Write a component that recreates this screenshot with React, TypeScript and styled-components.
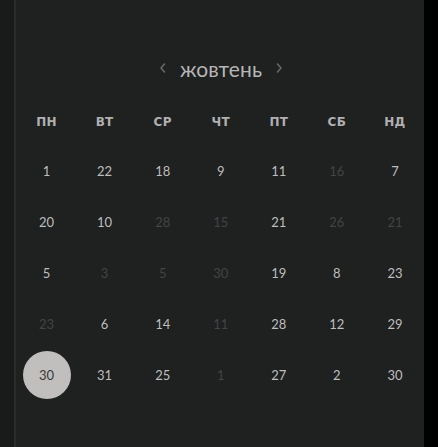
import React from "react";
import styled, { createGlobalStyle } from "styled-components";

const Global = createGlobalStyle`
  html, body { margin: 0; padding: 0; background: #000; }
  body { font-family: "Lato", "Noto Sans", sans-serif; }
`;

const Page = styled.div`
  display: flex;
  width: 438px;
  height: 447px;
  background: #000;
  overflow: hidden;
`;

const Rail = styled.div`
  width: 14px;
  background: #191a1a;
  border-right: 2px solid #2a2b2b;
`;

const Panel = styled.div`
  width: 408px;
  background: #1f2020;
  padding-top: 53px;
  box-sizing: border-box;
`;

const TitleRow = styled.div`
  height: 30px;
  display: flex;
  align-items: center;
  justify-content: center;
  gap: 12px;
  padding-left: 2px;
`;

const Title = styled.span`
  color: #b6b6b6;
  font-size: 21px;
  letter-spacing: 0.1px;
`;

const Chevron = styled.button`
  background: none;
  border: 0;
  padding: 0;
  display: flex;
  color: #6a6a6a;
  cursor: pointer;
`;

const Grid = styled.div`
  margin-top: 15px;
  padding-left: 1.5px;
  display: grid;
  grid-template-columns: repeat(7, 1fr);
  grid-auto-rows: 51px;
  grid-template-rows: 47px;
`;

const Weekday = styled.div`
  display: flex;
  align-items: center;
  justify-content: center;
  color: #b0b0b0;
  font-size: 12px;
  font-weight: 700;
  font-family: "DejaVu Sans", sans-serif;
  letter-spacing: 0.3px;
`;

const Cell = styled.div`
  display: flex;
  align-items: center;
  justify-content: center;
`;

const Day = styled.span<{ $dim?: boolean; $selected?: boolean }>`
  width: 48px;
  height: 48px;
  border-radius: 50%;
  display: flex;
  align-items: center;
  justify-content: center;
  font-size: 13px;
  color: ${(p) => (p.$selected ? "#3a3a3a" : p.$dim ? "#434444" : "#bebebe")};
  background: ${(p) => (p.$selected ? "#c0bfbd" : "transparent")};
`;

const weekdays = ["ПН", "ВТ", "СР", "ЧТ", "ПТ", "СБ", "НД"];

type D = [number, boolean?];
const rows: D[][] = [
  [[1], [22], [18], [9], [11], [16, true], [7]],
  [[20], [10], [28, true], [15, true], [21], [26, true], [21, true]],
  [[5], [3, true], [5, true], [30, true], [19], [8], [23]],
  [[23, true], [6], [14], [11, true], [28], [12], [29]],
  [[30], [31], [25], [1, true], [27], [2], [30]],
];

const ChevronIcon = ({ dir }: { dir: "l" | "r" }) => (
  <svg width="10" height="12" viewBox="0 0 10 12" fill="none">
    <path
      d={dir === "l" ? "M6.5 2 L3 6 L6.5 10" : "M3.5 2 L7 6 L3.5 10"}
      stroke="currentColor"
      strokeWidth="1.5"
      strokeLinecap="round"
      strokeLinejoin="round"
    />
  </svg>
);

export default function App() {
  return (
    <>
      <Global />
      <Page>
        <Rail />
        <Panel>
          <TitleRow>
            <Chevron aria-label="prev">
              <ChevronIcon dir="l" />
            </Chevron>
            <Title>жовтень</Title>
            <Chevron aria-label="next">
              <ChevronIcon dir="r" />
            </Chevron>
          </TitleRow>
          <Grid>
            {weekdays.map((w) => (
              <Weekday key={w}>{w}</Weekday>
            ))}
            {rows.map((r, ri) =>
              r.map(([n, dim], ci) => (
                <Cell key={`${ri}-${ci}`}>
                  <Day $dim={dim} $selected={ri === 4 && ci === 0}>
                    {n}
                  </Day>
                </Cell>
              ))
            )}
          </Grid>
        </Panel>
      </Page>
    </>
  );
}
